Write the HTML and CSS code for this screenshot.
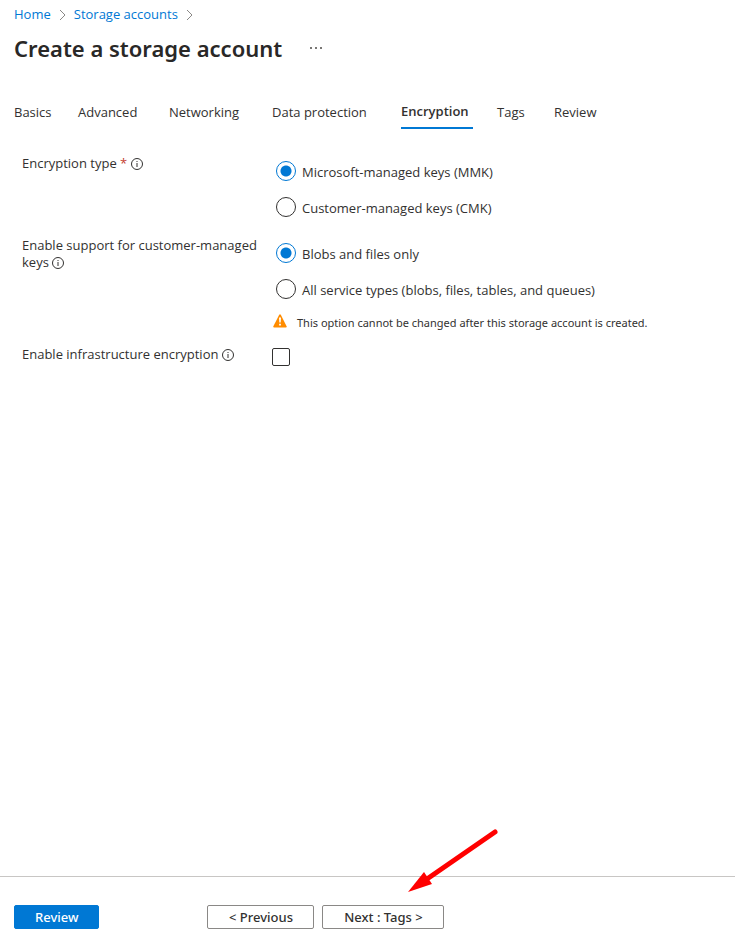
FILE: index.html
```html
<!DOCTYPE html>
<html lang="en">
<head>
<meta charset="utf-8">
<meta name="viewport" content="width=device-width, initial-scale=1">
<title>Create a storage account</title>
<link rel="stylesheet" href="styles.css">
</head>
<body>
<svg class="symbols" aria-hidden="true">
  <symbol id="info" viewBox="0 0 12 12">
    <circle cx="6" cy="6" r="5.5" fill="none" stroke="currentColor"/>
    <path d="M6 5v4M6 3v1" stroke="currentColor" fill="none"/>
  </symbol>
  <symbol id="chevron" viewBox="0 0 7 12">
    <path d="M1 1l5 5-5 5" fill="none" stroke="currentColor"/>
  </symbol>
</svg>
<header class="header">
  <nav class="breadcrumb" aria-label="Breadcrumb">
    <a href="#">Home</a>
    <svg class="chevron" aria-hidden="true"><use href="#chevron"/></svg>
    <a href="#">Storage accounts</a>
    <svg class="chevron" aria-hidden="true"><use href="#chevron"/></svg>
  </nav>
  <div class="title-row">
    <h1>Create a storage account</h1>
    <button class="more" type="button" aria-label="More actions">
      <svg viewBox="0 0 12 2" aria-hidden="true"><path d="M0 0h2v2H0zM5 0h2v2H5zM10 0h2v2h-2z" fill="currentColor"/></svg>
    </button>
  </div>
</header>
<nav class="tabs" aria-label="Steps">
  <a href="#">Basics</a>
  <a href="#">Advanced</a>
  <a href="#">Networking</a>
  <a href="#">Data protection</a>
  <a class="active" href="#" aria-current="step">Encryption</a>
  <a href="#">Tags</a>
  <a href="#">Review</a>
</nav>
<main class="form">
  <div class="row" role="radiogroup" aria-labelledby="type-label">
    <div class="label" id="type-label">Encryption type <span class="required">*</span> <svg class="info" aria-hidden="true"><use href="#info"/></svg></div>
    <div class="options">
      <label class="option"><input type="radio" name="type" checked><span>Microsoft-managed keys (MMK)</span></label>
      <label class="option"><input type="radio" name="type"><span>Customer-managed keys (CMK)</span></label>
    </div>
  </div>
  <div class="row" role="radiogroup" aria-labelledby="support-label">
    <div class="label" id="support-label">Enable support for customer-managed keys <svg class="info" aria-hidden="true"><use href="#info"/></svg></div>
    <div class="options">
      <label class="option"><input type="radio" name="support" checked><span>Blobs and files only</span></label>
      <label class="option"><input type="radio" name="support"><span>All service types (blobs, files, tables, and queues)</span></label>
      <p class="warning">
        <svg viewBox="0 0 14 14" aria-hidden="true">
          <path d="M6.2.8Q7-.5 7.8.8l5.8 11.4q.6 1.3-.8 1.3H1.2q-1.4 0-.8-1.3z" fill="#ff8c00"/>
          <path d="M6 3.5h2l-.3 5H6.3zM6.1 9.8h1.8v1.8H6.1z" fill="#fff"/>
        </svg>
        <span>This option cannot be changed after this storage account is created.</span>
      </p>
    </div>
  </div>
  <div class="row">
    <label class="label" for="infra">Enable infrastructure encryption <svg class="info" aria-hidden="true"><use href="#info"/></svg></label>
    <div class="options"><input type="checkbox" id="infra"></div>
  </div>
</main>
<footer class="footer">
  <button class="button primary" type="button">Review</button>
  <div class="pager">
    <button class="button previous" type="button">&lt; Previous</button>
    <button class="button next" type="button">Next : Tags &gt;</button>
    <svg class="arrow" viewBox="0 0 90 64" aria-hidden="true">
      <path d="M87 3L19 50" stroke="#f00" stroke-width="5" stroke-linecap="round"/>
      <path d="M0 63L16 43L24 55z" fill="#f00"/>
    </svg>
  </div>
</footer>
</body>
</html>
```
FILE: styles.css
```css
* {
  box-sizing: border-box;
}

body {
  margin: 0;
  min-height: 100vh;
  display: flex;
  flex-direction: column;
  background: #fff;
  color: #323130;
  font: 13px/17px "Open Sans", "Noto Sans", sans-serif;
}

a {
  text-decoration: none;
}

.symbols {
  position: absolute;
  width: 0;
  height: 0;
}

.header {
  padding: 6px 14px 0;
}

.breadcrumb {
  display: flex;
  align-items: center;
  gap: 8px;
}

.breadcrumb a {
  color: #0078d4;
}

.chevron {
  width: 7px;
  height: 12px;
  color: #8a8886;
}

.title-row {
  display: flex;
  align-items: center;
  gap: 28px;
  margin-top: 9px;
}

h1 {
  margin: 0;
  color: #292827;
  font-family: "Noto Sans", sans-serif;
  font-size: 22px;
  line-height: 32px;
  font-weight: 600;
}

.more {
  display: flex;
  padding: 0;
  border: 0;
  background: none;
  color: #797775;
}

.more svg {
  width: 12px;
  height: 2px;
}

.tabs {
  display: grid;
  grid-template-columns: 64px 91px 103px 129px 96px 57px auto;
  justify-content: start;
  margin-top: 39px;
  padding: 0 14px;
}

.tabs a {
  justify-self: start;
  height: 26px;
  padding-top: 1px;
  color: #323130;
  white-space: nowrap;
}

.tabs .active {
  padding: 0 4px 0 0;
  border-bottom: 2px solid #0078d4;
  font-weight: 600;
}

.form {
  display: flex;
  flex-direction: column;
  flex: 1;
  gap: 4px;
  padding: 26px 22px;
}

.row {
  display: grid;
  grid-template-columns: 250px 1fr;
}

.label {
  max-width: 244px;
}

.required {
  color: #c4402f;
}

.info {
  width: 12px;
  height: 12px;
  vertical-align: -2px;
}

.options {
  padding-top: 6px;
}

.option {
  display: flex;
  align-items: center;
  gap: 6px;
  height: 20px;
  margin: 0 0 16px 4px;
}

.option span {
  padding-top: 2px;
}

input {
  appearance: none;
  flex: none;
  margin: 0;
  border: 1px solid #323130;
  background: #fff;
}

input[type="radio"] {
  width: 20px;
  height: 20px;
  border-radius: 50%;
}

input[type="radio"]:checked {
  border-color: #0078d4;
  background: radial-gradient(circle, #0078d4 5px, #fff 6px);
}

input[type="checkbox"] {
  display: block;
  width: 18px;
  height: 18px;
  margin-top: -4px;
  border-radius: 2px;
}

input[type="checkbox"]:checked {
  background: #0078d4;
}

.warning {
  display: flex;
  align-items: flex-start;
  gap: 10px;
  margin: -1px 0 11px 1px;
  font-family: "Noto Sans", sans-serif;
  font-size: 11px;
  line-height: 17px;
}

.warning svg {
  width: 14px;
  height: 14px;
}

.footer {
  display: flex;
  gap: 108px;
  padding: 28px 14px 18px;
  border-top: 1px solid #c8c6c4;
}

.pager {
  position: relative;
  display: flex;
  gap: 8px;
}

.button {
  height: 24px;
  padding: 0 20px;
  border: 1px solid #8a8886;
  border-radius: 2px;
  background: #fff;
  color: #323130;
  font: 500 13px/17px "Noto Sans", sans-serif;
  white-space: nowrap;
}

.primary {
  min-width: 84px;
  border-color: #0078d4;
  background: #0078d4;
  color: #fff;
}

.previous {
  min-width: 107px;
}

.next {
  min-width: 122px;
}

.arrow {
  position: absolute;
  top: -76px;
  left: 201px;
  width: 90px;
  height: 64px;
  pointer-events: none;
}
```
